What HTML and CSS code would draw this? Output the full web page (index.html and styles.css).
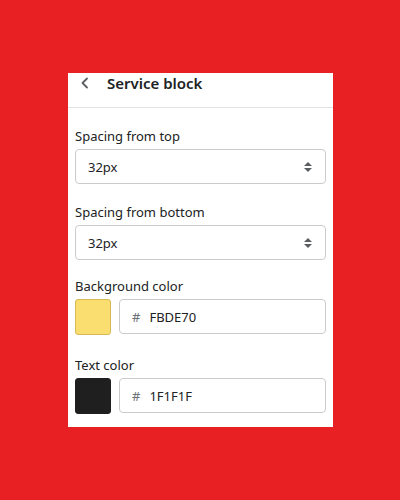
FILE: index.html
```html
<!DOCTYPE html>
<html lang="en">
<head>
  <meta charset="UTF-8" />
  <meta name="viewport" content="width=device-width, initial-scale=1.0"/>
  <title>Service block</title>
  <link rel="stylesheet" href="styles.css">
</head>
<body>
  <div class="panel">
    <div class="panel-header">
      <span class="back">
        <svg viewBox="0 0 10 12" width="10" height="12">
          <path d="M7 1.5 L2.5 6 L7 10.5" fill="none" stroke="#5c5f62" stroke-width="1.8" stroke-linecap="round" stroke-linejoin="round"/>
        </svg>
      </span>
      <h1 class="title">Service block</h1>
    </div>

    <div class="panel-body">
      <div class="field field-top">
        <label class="label">Spacing from top</label>
        <div class="select">
          <span>32px</span>
          <svg class="arrows" viewBox="0 0 8 12" width="8" height="12">
            <path d="M4 1 L8 5 L0 5 Z M4 11 L8 7 L0 7 Z" fill="#5c5f62"/>
          </svg>
        </div>
      </div>

      <div class="field field-bottom">
        <label class="label">Spacing from bottom</label>
        <div class="select">
          <span>32px</span>
          <svg class="arrows" viewBox="0 0 8 12" width="8" height="12">
            <path d="M4 1 L8 5 L0 5 Z M4 11 L8 7 L0 7 Z" fill="#5c5f62"/>
          </svg>
        </div>
      </div>

      <div class="field field-color">
        <label class="label">Background color</label>
        <div class="color-row">
          <div class="swatch swatch-yellow"></div>
          <div class="hex-input"><span class="hash">#</span>FBDE70</div>
        </div>
      </div>

      <div class="field field-color">
        <label class="label">Text color</label>
        <div class="color-row">
          <div class="swatch swatch-dark"></div>
          <div class="hex-input"><span class="hash">#</span>1F1F1F</div>
        </div>
      </div>
    </div>
  </div>
</body>
</html>
```

FILE: styles.css
```css
body {
  margin: 0;
  min-height: 100vh;
  background: #e82024;
  font-family: "Noto Sans", "Open Sans", sans-serif;
  color: #202223;
  overflow: hidden;
}

.panel {
  width: 265px;
  margin: 73px 0 0 68px;
  background: #fff;
}

.panel-header {
  height: 35px;
  display: flex;
  align-items: center;
  border-bottom: 1px solid #e1e3e5;
  padding-left: 12px;
  box-sizing: border-box;
}

.back {
  display: flex;
  width: 10px;
  height: 12px;
  margin-top: -15px;
}

.title {
  margin: -14px 0 0 17px;
  font-size: 15px;
  font-weight: 600;
  line-height: 18px;
}

.panel-body {
  padding: 19px 7px 13px 7px;
}

.field-top {
  margin-bottom: 19px;
}

.field-bottom {
  margin-bottom: 17px;
}

.field-color + .field-color {
  margin-top: 21px;
}

.label {
  display: block;
  font-size: 13px;
  line-height: 18px;
  margin-bottom: 4px;
}

.select,
.hex-input {
  height: 35px;
  box-sizing: border-box;
  border: 1px solid #c9cccf;
  border-radius: 4px;
  display: flex;
  align-items: center;
  font-size: 13px;
}

.select {
  justify-content: space-between;
  padding: 0 13px 0 12px;
}

.color-row {
  display: flex;
  gap: 8px;
}

.swatch {
  width: 36px;
  height: 36px;
  box-sizing: border-box;
  border-radius: 3px;
}

.swatch-yellow {
  background: #fbde70;
  border: 1px solid #d9b955;
}

.swatch-dark {
  background: #1f1f1f;
  border: 1px solid #1f1f1f;
}

.hex-input {
  flex: 1;
  padding-left: 12px;
}

.hash {
  color: #6d7175;
  margin-right: 9px;
}
```
